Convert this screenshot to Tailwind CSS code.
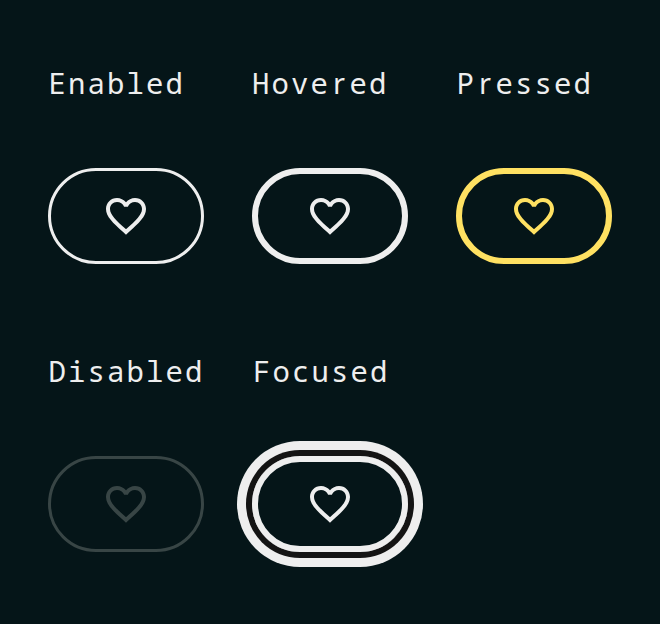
<!DOCTYPE html>
<html lang="en"><head><meta charset="utf-8"><title>Button states</title>
<script src="https://cdn.jsdelivr.net/npm/@tailwindcss/browser@4"></script></head>
<body class="bg-[#051518] text-[#eeeeee] w-[660px] h-[624px] overflow-hidden font-['Noto_Sans_Mono','DejaVu_Sans_Mono',monospace]">
<svg class="hidden"><symbol id="heart" viewBox="0 0 24 24"><path fill="currentColor" d="M16.5 3c-1.74 0-3.41.81-4.5 2.09C10.91 3.81 9.24 3 7.5 3 4.42 3 2 5.42 2 8.5c0 3.78 3.4 6.86 8.55 11.54L12 21.35l1.45-1.32C18.6 15.36 22 12.28 22 8.5 22 5.42 19.58 3 16.5 3zm-4.4 15.55l-.1.1-.1-.1C7.14 14.24 4 11.39 4 8.5 4 6.5 5.5 5 7.5 5c1.54 0 3.04.99 3.57 2.36h1.87C13.46 5.99 14.96 5 16.5 5c2 0 3.5 1.5 3.5 3.5 0 2.89-3.14 5.74-7.9 10.05z"/></symbol></svg>
<main class="grid grid-cols-[156px_156px_156px] gap-x-12 px-12 pt-[63px] text-[29px] leading-[39px] tracking-[2.1px]">
<section class="h-72"><h2 class="h-[105px] pl-[0.5px] whitespace-nowrap">Enabled</h2><button class="flex w-[156px] h-24 items-center justify-center rounded-full border-3"><svg class="size-12"><use href="#heart"/></svg></button></section>
<section class="h-72"><h2 class="h-[105px] whitespace-nowrap">Hove<span class="inline-block w-[19.5px] pl-[3px] leading-none font-['Noto_Sans']">r</span>ed</h2><button class="flex w-[156px] h-24 items-center justify-center rounded-full border-6"><svg class="size-12"><use href="#heart"/></svg></button></section>
<section class="h-72"><h2 class="h-[105px] pl-[0.5px] whitespace-nowrap">P<span class="inline-block w-[19.5px] pl-[3px] leading-none font-['Noto_Sans']">r</span>essed</h2><button class="flex w-[156px] h-24 items-center justify-center rounded-full border-6 text-[#ffe162]"><svg class="size-12"><use href="#heart"/></svg></button></section>
<section class="h-72"><h2 class="h-[105px] pl-[0.5px] whitespace-nowrap">Disabled</h2><button class="flex w-[156px] h-24 items-center justify-center rounded-full border-3 text-[#384545]"><svg class="size-12"><use href="#heart"/></svg></button></section>
<section class="h-72"><h2 class="h-[105px] pl-px whitespace-nowrap">Focused</h2><button class="flex w-[156px] h-24 items-center justify-center rounded-full border-6 shadow-[0_0_0_6px_#141414,0_0_0_15px_#eeeeee]"><svg class="size-12"><use href="#heart"/></svg></button></section>
</main></body></html>
